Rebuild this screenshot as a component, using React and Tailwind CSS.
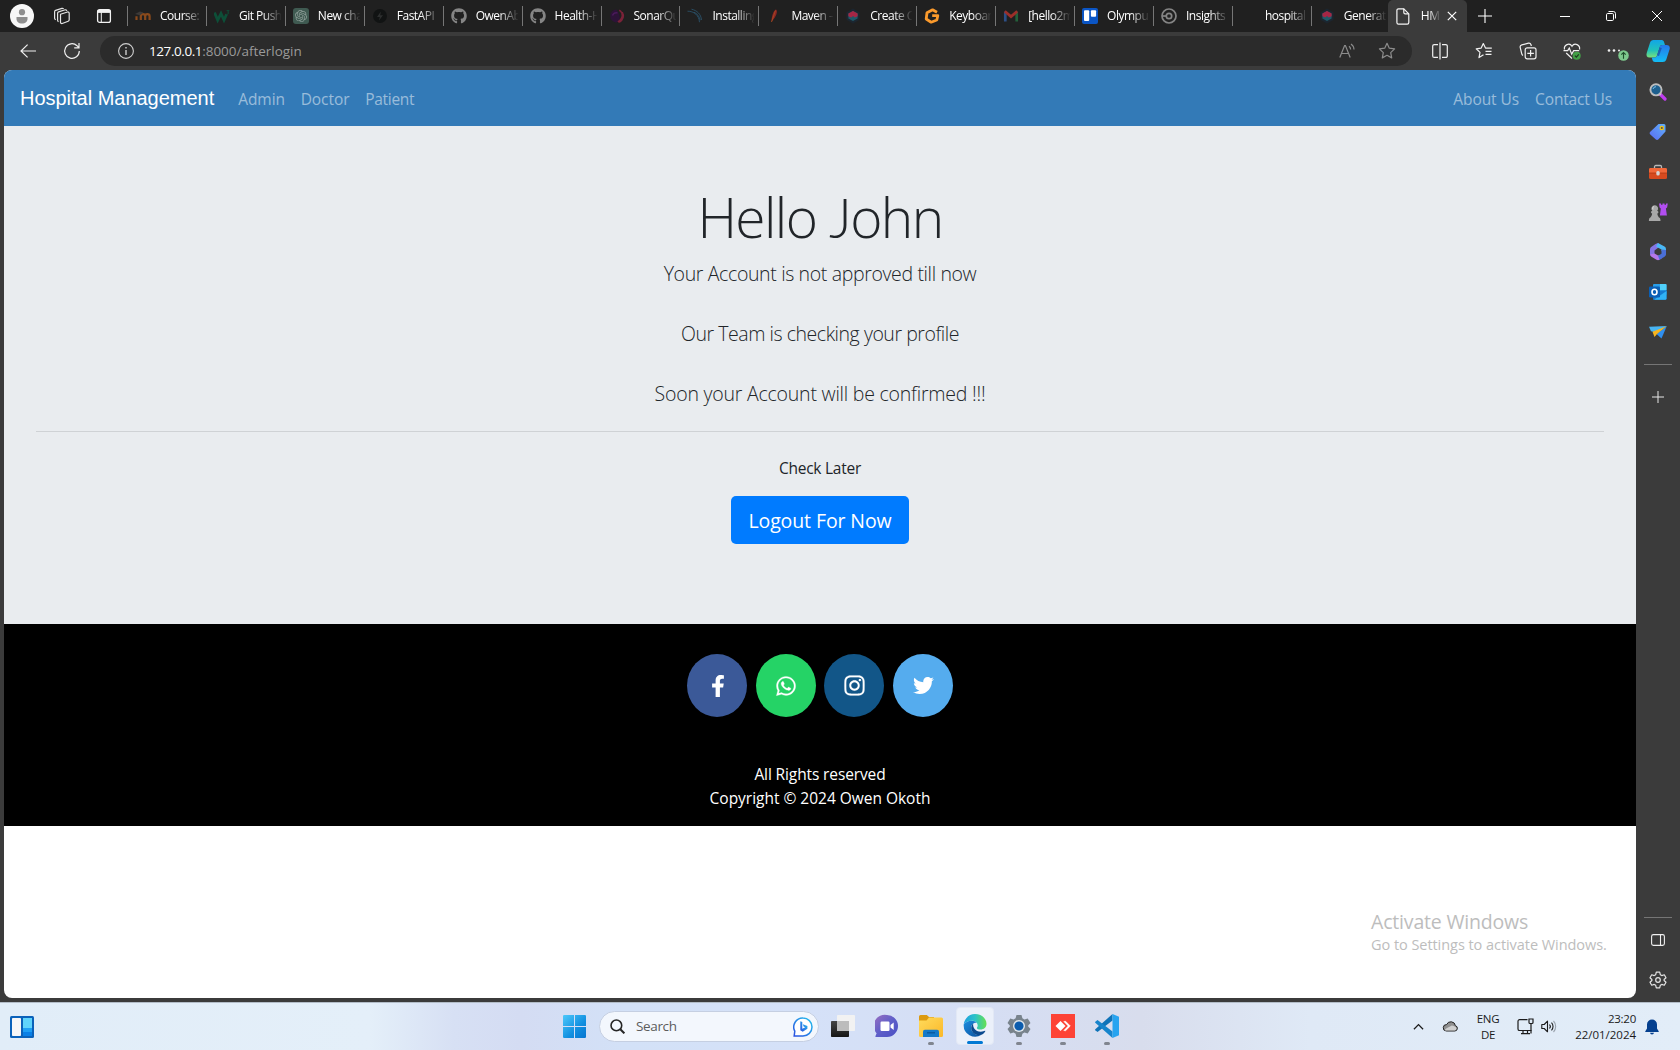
import React from "react";
import { FaFacebookF, FaWhatsapp, FaInstagram, FaTwitter, FaGithub } from "react-icons/fa";
import { SiOpenai } from "react-icons/si";

/* ---------- Tab favicons ---------- */

const MoodleIcon = () => (
  <svg viewBox="0 0 16 16" className="size-4">
    <path d="M1.5 12V8.2M5.8 12V8.4a2.2 2.2 0 0 1 4.4 0V12M10.2 8.4a2.2 2.2 0 0 1 4.4 0V12" fill="none" stroke="#8a4a1c" strokeWidth="2.2" />
    <path d="M0 6l5-2.6 3.5 1.2L5 7.2 0 6z" fill="#3d3a38" />
  </svg>
);
const W3Icon = () => (
  <svg viewBox="0 0 16 16" className="size-4">
    <path d="M.5 4.500l3.200 7.600L7 5.500l3 6.600 2.600-5.800" fill="none" stroke="#0d4f38" strokeWidth="2.800" />
    <path d="M12.600 2.600h2.400l-1.400 1.600c1.800 0 1.600 2.200-.8 1.800" fill="none" stroke="#0d4f38" strokeWidth=".9" />
  </svg>
);
const ChatIcon = () => (
  <span className="flex size-4 items-center justify-center rounded-[3px] bg-[#3f5a51]">
    <SiOpenai className="size-3 text-[#8b9c96]" />
  </span>
);
const FastIcon = () => (
  <svg viewBox="0 0 16 16" className="size-4">
    <circle cx="8" cy="8" r="7" fill="#111313" />
    <path d="M8.800 3.600L5 9h2.800l-.8 3.600L11 7.200H8.200z" fill="#2d2f2f" />
  </svg>
);
const HubIcon = () => <FaGithub className="size-4 text-[#858585]" />;
const SonarIcon = () => (
  <svg viewBox="0 0 16 16" className="size-4">
    <path d="M7.500 1.500a6.500 6.500 0 1 0 .5 13c2.600-1.500 3.200-4 2.400-6.800C9.800 5.200 8.800 3.200 7.500 1.500z" fill="#2d1338" />
    <path d="M3.500 7.500a4.500 4.500 0 0 1 5-2.500" fill="none" stroke="#4b1a5c" strokeWidth="1.500" />
    <path d="M10.300 2.200c4 2.600 4.400 8-1.400 11.800M13.200 4.200c2.200 3.400 1.200 7.800-3 10.200" fill="none" stroke="#7b2238" strokeWidth="1.500" />
  </svg>
);
const WaveIcon = () => (
  <svg viewBox="0 0 16 16" className="size-4" fill="none" stroke="#2a5068" strokeWidth=".9">
    <path d="M.5 3.200c6.500 0 11.500 4 12 11M4.500 1.200c5.500 1.200 9.500 5 10 10.800M7 4.200c3 1.400 5.500 4 6.200 8" />
  </svg>
);
const MavenIcon = () => (
  <svg viewBox="0 0 16 16" className="size-4">
    <path d="M9.700 1.500c2 .6 1.300 4-.2 6.800-1 2-2.500 3.700-4 5.700.1-3 .5-9.500 4.200-12.500z" fill="#8c2424" />
    <path d="M9.500 2.500L5.500 14" stroke="#a8501f" strokeWidth=".8" />
  </svg>
);
const CubeIcon = () => (
  <svg viewBox="0 0 16 16" className="size-4">
    <path d="M8 .5l6.500 3.700v7.600L8 15.500l-6.500-3.700V4.200z" fill="#1c2630" />
    <path d="M8 3l4.600 2.500v5L8 13l-4.600-2.500v-5z" fill="#20596a" />
    <path d="M8 3l4.600 2.500v2.700L9.800 9.600 8 8 6.200 9.600 3.400 8.200V5.500z" fill="#a62646" />
  </svg>
);
const GitIcon = () => (
  <svg viewBox="0 0 16 16" className="size-4">
    <path d="M13 4.200L8.600 1.800 3 4.800 2.200 11l5 3.200 5.600-2.200 1-4.300H8.200" fill="none" stroke="#fb9a2c" strokeWidth="2.800" strokeLinejoin="round" />
  </svg>
);
const MailIcon = () => (
  <svg viewBox="0 0 16 16" className="size-4" fill="none" strokeWidth="2.700">
    <path d="M2.300 3.600V13.500" stroke="#2c4f86" />
    <path d="M13.700 3.600V13.500" stroke="#23603a" />
    <path d="M1.800 3.300L8 8.600l6.200-5.300" stroke="#9c2f29" />
  </svg>
);
const BoardIcon = () => (
  <svg viewBox="0 0 16 16" className="size-4">
    <rect width="16" height="16" rx="2" fill="#0b55c4" />
    <rect x="2" y="2.300" width="5.200" height="10.700" rx="1" fill="#fff" />
    <rect x="8.900" y="2.300" width="5.200" height="6.400" rx="1" fill="#fff" />
  </svg>
);
const TargetIcon = () => (
  <svg viewBox="0 0 16 16" className="size-4" fill="none" stroke="#858585" strokeWidth="1.700">
    <circle cx="8" cy="8" r="7" />
    <circle cx="8" cy="8" r="2.700" />
    <path d="M1 8h4.300" />
  </svg>
);
const Blank = () => <span className="size-4" />;

const TABS = [
  ["Course:", MoodleIcon], ["Git Push", W3Icon], ["New cha", ChatIcon], ["FastAPI", FastIcon],
  ["OwenAb", HubIcon], ["Health-H", HubIcon], ["SonarQu", SonarIcon], ["Installing", WaveIcon],
  ["Maven –", MavenIcon], ["Create C", CubeIcon], ["Keyboar", GitIcon], ["[hello2m", MailIcon],
  ["Olympu", BoardIcon], ["Insights", TargetIcon], ["hospital", Blank], ["Generat", CubeIcon],
];

function TabStrip() {
  return (
    <div className="flex h-8 items-center bg-[#202020] text-white">
      <div className="flex w-[127px] items-center pl-[10px]">
        <span className="flex size-6 items-center justify-center rounded-full bg-[#f7f7f7]">
          <svg viewBox="0 0 12 15" className="h-[15px] w-3" fill="#8e8e8e">
            <circle cx="6" cy="3.200" r="3.100" />
            <path d="M.5 8h11v1.800C11.500 13 9 14.600 6 14.600S.5 13 .5 9.800z" />
          </svg>
        </span>
        <svg viewBox="0 0 18 18" className="ml-[19px] size-[18px]" fill="none" stroke="#e4e4e4" strokeWidth="1.200" strokeLinejoin="round">
          <path d="M7.500 7.200l7-2.200a1.300 1.300 0 0 1 1.700 1.300v6.400a1.600 1.600 0 0 1-1 1.500l-6 2.300a1.300 1.300 0 0 1-1.700-1.300z" />
          <path d="M5.600 14.600a1.300 1.300 0 0 1-1-1.300V6.400a1.500 1.500 0 0 1 1-1.500l6.600-2.100a1.300 1.300 0 0 1 1.600 1" />
          <path d="M2.800 12.600a1.300 1.300 0 0 1-1.200-1.300V4.900a1.500 1.500 0 0 1 1-1.500l6.300-2a1.300 1.300 0 0 1 1.600.7" />
        </svg>
        <svg viewBox="0 0 16 16" className="ml-[25px] size-4" fill="none" stroke="#f2f2f2" strokeWidth="1.300">
          <rect x="1.600" y="1.600" width="12.800" height="12.800" rx="2" />
          <path d="M1.600 3.400h12.800" strokeWidth="3" />
          <path d="M5.300 4v10" strokeWidth="1" />
        </svg>
      </div>
      {TABS.map(([label, Icon], i) => (
        <div key={i} className="flex h-5 w-[78.930px] items-center border-l border-[#767676] pl-[7px]">
          <Icon />
          <span className="ml-[9px] w-[42px] overflow-hidden whitespace-nowrap [mask-image:linear-gradient(to_right,#000_55%,transparent_102%)] text-[12px] leading-5 tracking-[-0.500px]">
            {label}
          </span>
        </div>
      ))}
      <div className="-ml-[2px] flex h-8 w-[79px] items-center rounded-t-[5px] bg-[#3b3b3b] pl-[8px]">
        <svg viewBox="0 0 14 17" className="h-[17px] w-[14px]" fill="none" stroke="#f5f5f5" strokeWidth="1.200" strokeLinejoin="round">
          <path d="M2.500.800h5.300l5 5v8.700a1.600 1.600 0 0 1-1.600 1.600H2.500A1.600 1.600 0 0 1 .900 14.500V2.400A1.600 1.600 0 0 1 2.500.800z" />
          <path d="M7.800.800v3.600c0 .9.500 1.400 1.400 1.400h3.600" />
        </svg>
        <span className="ml-[11px] w-[19px] overflow-hidden whitespace-nowrap [mask-image:linear-gradient(to_right,#000_40%,transparent_105%)] text-[12px] leading-5 tracking-[-0.3px]">HM</span>
        <svg viewBox="0 0 10 10" className="ml-[7px] size-[10px]" stroke="#fff" strokeWidth="1.200"><path d="M.8.8l8.400 8.400M9.200.8L.8 9.200" /></svg>
      </div>
      <svg viewBox="0 0 14 14" className="ml-[11px] size-[14px]" stroke="#fff" strokeWidth="1.100"><path d="M7 0v14M0 7h14" /></svg>
      <div className="ml-auto flex">
        <span className="flex w-[46px] justify-center"><svg viewBox="0 0 10 10" className="size-[10px]" stroke="#fff"><path d="M0 5.500h10" /></svg></span>
        <span className="flex w-[46px] justify-center">
          <svg viewBox="0 0 10 10" className="size-[10px]" fill="none" stroke="#fff">
            <rect x=".5" y="2.500" width="7" height="7" rx="1.200" />
            <path d="M2.500.5h4.800a2.200 2.200 0 0 1 2.200 2.200v4.800" />
          </svg>
        </span>
        <span className="flex w-[46px] justify-center"><svg viewBox="0 0 10 10" className="size-[10px]" stroke="#fff"><path d="M0 0l10 10M10 0L0 10" /></svg></span>
      </div>
    </div>
  );
}

/* ---------- Address bar ---------- */

const Cell = ({ children }) => <span className="flex w-11 items-center justify-center">{children}</span>;

function Toolbar() {
  return (
    <div className="flex h-[38px] bg-[#3b3b3b] text-[#f0f0f0]">
      <div className="flex w-[100px] items-center pl-[6px]">
        <Cell>
          <svg viewBox="0 0 16 14" className="h-[14px] w-4" fill="none" stroke="currentColor" strokeWidth="1.200"><path d="M16 7H1M7.600.600L1 7l6.600 6.400" /></svg>
        </Cell>
        <Cell>
          <svg viewBox="0 0 18 18" className="size-[18px]" fill="none" stroke="currentColor" strokeWidth="1.200">
            <path d="M16.300 9A7.300 7.300 0 1 1 14 3.700l1.800 1.900M16 1v4.800h-4.800" />
          </svg>
        </Cell>
      </div>
      <div className="mt-1 flex h-[30px] w-[1312px] items-center rounded-full bg-[#2b2b2b] pl-[18px] pr-[16px]">
        <svg viewBox="0 0 16 16" className="size-4" fill="none" stroke="#cfcfcf" strokeWidth="1.100">
          <circle cx="8" cy="8" r="7.400" />
          <path d="M8 7v5" strokeWidth="1.400" /><path d="M8 4v1.500" strokeWidth="1.400" />
        </svg>
        <span className="ml-[15px] text-[13.500px] leading-[30px] tracking-[-0.420px] text-white">127.0.0.1</span>
        <span className="text-[13.500px] leading-[30px] tracking-[-0.020px] text-[#9a9a9a]">:8000/afterlogin</span>
        <svg viewBox="0 0 16 16" className="ml-auto size-4" fill="none" stroke="#8c8c8c" strokeWidth="1.200">
          <path d="M.8 14.500L5.600 2.500h.8l4.800 12M2.500 10.500h7" />
          <path d="M10 3.300a4 4 0 0 1 1.600 3.200M12 1a7 7 0 0 1 3 5.500" />
        </svg>
        <svg viewBox="0 0 18 18" className="ml-[23px] size-[18px]" fill="none" stroke="#8c8c8c" strokeWidth="1.200" strokeLinejoin="round">
          <path d="M9 1.300l2.300 4.900 5.300.7-3.900 3.700 1 5.300L9 13.300l-4.700 2.600 1-5.300L1.400 6.900l5.300-.7z" />
        </svg>
      </div>
      <div className="ml-[6px] flex">
        <Cell>
          <svg viewBox="0 0 16 18" className="h-[18px] w-4" fill="none" stroke="currentColor" strokeWidth="1.200">
            <path d="M8 .500v17M6 2.600H2.200A1.500 1.500 0 0 0 .700 4.100v9.800a1.500 1.500 0 0 0 1.500 1.500H6M10 2.600h3.800a1.500 1.500 0 0 1 1.500 1.500v9.800a1.500 1.500 0 0 1-1.500 1.500H10" />
          </svg>
        </Cell>
        <Cell>
          <svg viewBox="0 0 18 18" className="size-[18px]" fill="none" stroke="currentColor" strokeWidth="1.200" strokeLinejoin="round">
            <path d="M8.500 12.800L4 15.600l1-5.200L1.200 6.800l5-.7L8.300 1.600l2.200 4.500h6.300M10.500 9.300h6M10.500 12.300h6" />
          </svg>
        </Cell>
        <Cell>
          <svg viewBox="0 0 18 18" className="size-[18px]" fill="none" stroke="currentColor" strokeWidth="1.200">
            <rect x="6.200" y="5.800" width="10.800" height="11" rx="2" />
            <path d="M11.600 8v6.600M8.300 11.300h6.600" />
            <path d="M4 13.500a2.500 2.500 0 0 1-1.300-1.800L1.200 5.400a2.200 2.200 0 0 1 1.600-2.600L9.500 1.200A2.200 2.200 0 0 1 12 2.800l.4 1.200" />
          </svg>
        </Cell>
        <Cell>
          <svg viewBox="0 0 18 18" className="size-[18px]" fill="none" stroke="currentColor" strokeWidth="1.200">
            <path d="M1.500 7.500c-1-4.500 5-7.500 7.500-3.200C11.500 0 17.500 3 16.500 7.500M.5 8.600h4.200l1.600-2.500 2.400 6 2-3.500h5.500M3.200 11L9 16.500" />
            <circle cx="13.700" cy="13.700" r="4" fill="#43a047" stroke="none" />
            <path d="M11.900 13.700l1.400 1.400 2.500-2.800" stroke="#1d3a1f" />
          </svg>
        </Cell>
        <Cell>
          <svg viewBox="0 0 26 20" className="h-5 w-[26px]">
            <g fill="#f0f0f0"><circle cx="6" cy="9.500" r="1.300" /><circle cx="11" cy="9.500" r="1.300" /><circle cx="16" cy="9.500" r="1" /></g>
            <circle cx="20.500" cy="14.500" r="5.300" fill="#7dc88c" />
            <path d="M20.500 17.800v-6M18.300 13.700l2.200-2.200 2.200 2.200" fill="none" stroke="#1f4d2a" strokeWidth="1.100" />
          </svg>
        </Cell>
      </div>
      <span className="flex w-10 items-center justify-center">
        <svg viewBox="0 0 24 24" className="size-6">
          <defs>
            <linearGradient id="cpA" x1="0" y1="0" x2="0" y2="1"><stop offset="0" stopColor="#12a5e8" /><stop offset=".6" stopColor="#22c3b8" /><stop offset="1" stopColor="#7be07a" /></linearGradient>
            <linearGradient id="cpB" x1="0" y1="0" x2="0" y2="1"><stop offset="0" stopColor="#2577ea" /><stop offset="1" stopColor="#12bdf5" /></linearGradient>
          </defs>
          <path d="M7.500 1h8.200c1.500 0 2 1 2.400 2.200L19 6h-2.500c-1.600 0-2.400.8-2.900 2.400l-2.600 8c-.5 1.500-1.400 2.100-3 2.100H3.500C.8 18.500 0 16.500.7 14L4 3.700C4.600 1.900 5.700 1 7.500 1z" fill="url(#cpA)" />
          <path d="M16.500 6h4c2.800 0 3.800 2 3 4.500l-3.200 10c-.6 1.700-1.800 2.500-3.500 2.500H9c-1.400 0-2.200-.8-2.600-2.200l-.7-2.300H8c1.600 0 2.500-.6 3-2.100l2.600-8C14.100 6.800 14.900 6 16.500 6z" fill="url(#cpB)" />
          <path d="M13.600 8.400L11 16.400 13 17l2.800-8z" fill="#1b3f8f" opacity=".6" />
        </svg>
      </span>
    </div>
  );
}

/* ---------- Side bar ---------- */

const SIDE_ICONS = [
  <svg viewBox="0 0 18 18" className="size-[18px]">
    <path d="M11 11l5 5" stroke="#c03df0" strokeWidth="3.200" strokeLinecap="round" />
    <path d="M9.800 9.800l2 2" stroke="#cfcfcf" strokeWidth="2" />
    <circle cx="7" cy="6.800" r="5.600" fill="#1d5f8e" stroke="#bdbdbd" strokeWidth="1.900" />
    <path d="M4 6a3 3 0 0 1 3-2.300" stroke="#7fc3ea" fill="none" />
  </svg>,
  <svg viewBox="0 0 18 18" className="size-[18px]">
    <defs><linearGradient id="tag" x1="1" y1="0" x2="0" y2="1"><stop offset="0" stopColor="#5fb0fb" /><stop offset="1" stopColor="#5b6bf0" /></linearGradient></defs>
    <path d="M9.500 1h5.500a1.500 1.500 0 0 1 1.500 1.500v6l-7 7.700a2 2 0 0 1-2.900 0L1.300 11.500a2 2 0 0 1 0-2.800z" fill="url(#tag)" />
    <circle cx="12.800" cy="5" r="1.700" fill="#555" stroke="#f3c513" strokeWidth="1.200" />
  </svg>,
  <svg viewBox="0 0 18 18" className="size-[18px]">
    <path d="M5.500 5.500V3.800A1.300 1.300 0 0 1 6.800 2.500h4.400a1.300 1.300 0 0 1 1.300 1.300v1.700" fill="none" stroke="#b9b9b9" strokeWidth="1.300" />
    <rect x="0" y="5" width="18" height="11" rx="1.500" fill="#d64a1f" />
    <path d="M0 6.500A1.500 1.500 0 0 1 1.500 5h15A1.500 1.500 0 0 1 18 6.500V10H0z" fill="#f0683a" />
    <path d="M0 10h18" stroke="#a8330f" strokeWidth=".7" />
    <rect x="7.300" y="8" width="3.400" height="4.500" rx="1.500" fill="#d5d5d5" />
  </svg>,
  <svg viewBox="0 0 20 20" className="size-5">
    <path d="M11 1.500h2v1.300h1.500V1.500h2v1.300H18V1.500h1.800l-.7 4-1.200.9 1 7.100h-7l.9-7.100-1.200-.9z" fill="#b24ef0" />
    <path d="M6.800 3.200a3.300 3.300 0 0 1 2.400 5.600l1.100.7v1.400l-1 .5c.2 2 .9 3.400 2.500 4.700.7.600.7 2.900.7 2.900H.9s0-2.300.7-2.900c1.700-1.300 2.300-2.700 2.500-4.700l-1-.5V9.500l1.200-.7a3.300 3.300 0 0 1 2.500-5.600z" fill="#a8a8a8" />
    <path d="M6 4.500a2 2 0 0 0-1 3" stroke="#dedede" fill="none" />
  </svg>,
  <svg viewBox="0 0 18 18" className="size-[18px]">
    <path d="M9 0L6.500 1 2.500 3.800A3 3 0 0 0 1 6.300v5.200c1.500 1.500 3 1.500 4.500.3V7.500L11.500 3z" fill="#8574e4" />
    <path d="M9 0l6.500 3.600A3 3 0 0 1 17 6.200v4L12.500 8V6.500L7 3.500z" fill="#4ab8f5" />
    <path d="M1 11.500a3 3 0 0 0 1.500 2.300l5 3a3 3 0 0 0 3 0L13 15l-.5-3L9 12.500l-3.500-2z" fill="#b678ea" />
    <path d="M17 7v4.500a3 3 0 0 1-1.500 2.300l-5 3-1.500-4 3.500-2V6.500z" fill="#4a6fd8" />
  </svg>,
  <svg viewBox="0 0 18 18" className="size-[18px]">
    <rect x="4" y="1" width="13.500" height="11" rx="1" fill="#2b9fe8" />
    <path d="M11 1h5.500a1 1 0 0 1 1 1v5H11z" fill="#50d0fa" />
    <path d="M4.500 8l13-.5V15.500a1.300 1.300 0 0 1-1.300 1.300H4z" fill="#157bd0" />
    <path d="M5 16.800L17.500 8v7.500a1.300 1.300 0 0 1-1.300 1.300z" fill="#30b2f5" />
    <rect x="0" y="3.500" width="11" height="11" rx="1.200" fill="#0a5fb5" />
    <ellipse cx="5.500" cy="9" rx="2.500" ry="2.700" fill="none" stroke="#fff" strokeWidth="1.600" />
  </svg>,
  <svg viewBox="0 0 18 18" className="size-[18px]">
    <path d="M0 3.800L17.800 3 7 9.500 2 8.200z" fill="#48b4f2" />
    <path d="M17.800 3L12.500 15.500 7.500 11z" fill="#2f8ff0" />
    <path d="M17.500 3.200L3.500 8.700l2 5.300L8 11z" fill="#f7b51f" />
  </svg>,
];

function Sidebar() {
  return (
    <div className="flex w-11 flex-col items-center bg-[#3b3b3b] pt-[2px]">
      {SIDE_ICONS.map((icon, i) => <span key={i} className="flex h-10 items-center justify-center">{icon}</span>)}
      <span className="mt-[12px] h-px w-7 bg-[#757575]" />
      <svg viewBox="0 0 12 12" className="mt-[26px] size-3" stroke="#e8e8e8" strokeWidth="1"><path d="M6 0v12M0 6h12" /></svg>
      <span className="mt-auto h-px w-7 bg-[#757575]" />
      <span className="mt-[2px] flex h-10 items-center justify-center">
        <svg viewBox="0 0 14 12" className="h-3 w-[14px]" fill="none" stroke="#f0f0f0" strokeWidth="1.100"><rect x=".6" y=".6" width="12.800" height="10.800" rx="1.800" /><path d="M9.500 1v10" /></svg>
      </span>
      <span className="mb-[2px] flex h-10 items-center justify-center">
        <svg viewBox="0 0 18 18" className="size-[18px]" fill="none" stroke="#e4e4e4" strokeWidth="1.200" strokeLinejoin="round">
          <path d="M7.300 1.200h3.400l.6 2.500 1.500.9 2.500-.8 1.700 2.900L15.100 8.500v1l1.900 1.800-1.700 2.900-2.500-.8-1.500.9-.6 2.500H7.300l-.6-2.500-1.500-.9-2.500.8L1 11.300l1.900-1.800v-1L1 6.700l1.700-2.900 2.500.8 1.500-.9z" />
          <circle cx="9" cy="9" r="2.300" />
        </svg>
      </span>
    </div>
  );
}

/* ---------- Web page ---------- */

function SocialLink({ color, children }) {
  return <a className={`flex h-[63px] w-[60px] items-center justify-center rounded-[50%] text-white ${color}`}>{children}</a>;
}

function Page() {
  return (
    <div className="mb-1 ml-1 flex w-[1632px] flex-col overflow-hidden rounded-lg bg-white text-[#212529]">
      <nav className="flex h-14 items-center bg-[#337ab7] pl-4 pr-[24px] pt-px text-[15.500px] leading-6 text-white/50">
        <span className="mb-[2px] mr-6 font-['Liberation_Sans',Arial,sans-serif] text-[20px] leading-[30px] tracking-[-0.020px] text-white">Hospital Management</span>
        <span className="w-[62.500px] tracking-[-0.050px]">Admin</span>
        <span className="w-[64.500px] tracking-[-0.060px]">Doctor</span>
        <span className="tracking-[-0.280px]">Patient</span>
        <span className="ml-auto mr-[16px] tracking-[-0.060px]">About Us</span>
        <span className="tracking-[-0.150px]">Contact Us</span>
      </nav>
      <header className="flex h-[498px] flex-col items-center bg-[#e9ecef] px-8 pt-[58px]">
        <h1 className="mb-[8px] h-[67px] whitespace-nowrap text-[55px] font-light leading-[66px] tracking-[-1.600px]">
          Hello <span className="font-['Lato','Open_Sans',sans-serif]">J</span>ohn
        </h1>
        <p className="text-[19.500px] font-light leading-[30px] tracking-[-0.360px]">Your Account is not approved till now</p>
        <p className="mt-[30px] text-[19.500px] font-light leading-[30px] tracking-[-0.460px]">Our Team is checking your profile</p>
        <p className="mt-[30px] text-[19.500px] font-light leading-[30px] tracking-[-0.220px]">Soon your Account will be confirmed !!!</p>
        <hr className="mt-[22px] w-[1568px] border-t border-[#cfd2d5]" />
        <p className="mt-6 text-[15.500px] leading-6 tracking-[-0.250px]">Check Later</p>
        <button className="mt-4 h-12 w-[178px] rounded-[5px] bg-[#007bff] pt-[2px] text-[19.500px] leading-[30px] tracking-[-0.100px] text-white">Logout For Now</button>
      </header>
      <footer className="flex h-[202px] flex-col items-center bg-black pt-[30px] text-[15.500px] leading-6 text-white">
        <div className="flex gap-[8.700px]">
          <SocialLink color="bg-[#3b5998]"><FaFacebookF className="ml-[2px] h-[22px] w-[18px]" /></SocialLink>
          <SocialLink color="bg-[#25d366]"><FaWhatsapp className="size-[22px] stroke-white stroke-[6px]" /></SocialLink>
          <SocialLink color="bg-[#125688]"><FaInstagram className="size-[23px] stroke-white stroke-[4px]" /></SocialLink>
          <SocialLink color="bg-[#55acee]"><FaTwitter className="size-[21px]" /></SocialLink>
        </div>
        <p className="mt-[45px] tracking-[-0.120px]">All Rights reserved</p>
        <p className="tracking-[-0.020px]">Copyright © 2024 Owen Okoth</p>
      </footer>
      <div className="ml-auto mr-[28px] mt-[82px] w-[237px] whitespace-nowrap text-[#bdbdbd]">
        <p className="text-[19.500px] leading-7 tracking-[-0.180px]">Activate Windows</p>
        <p className="text-[14.500px] leading-[18px] tracking-[-0.050px]">Go to Settings to activate Windows.</p>
      </div>
    </div>
  );
}

/* ---------- Task bar ---------- */

const APPS = [
  [<svg viewBox="0 0 24 24" className="size-6">
    <defs><linearGradient id="tvA" x1="0" y1="0" x2="0" y2="1"><stop offset="0" stopColor="#454545" /><stop offset="1" stopColor="#151515" /></linearGradient></defs>
    <rect x="0" y="7" width="18" height="16" rx=".8" fill="url(#tvA)" />
    <rect x="6" y="1" width="18" height="16" rx=".8" fill="#f2f2f2" />
    <rect x="6" y="7" width="12" height="10" fill="#bcbcbc" />
  </svg>, null],
  [<svg viewBox="0 0 24 24" className="size-6">
    <defs><linearGradient id="tm" x1="0" y1="0" x2="1" y2="1"><stop offset="0" stopColor="#9b6fc0" /><stop offset=".5" stopColor="#5f5fc9" /><stop offset="1" stopColor="#4a4fc4" /></linearGradient></defs>
    <path d="M12 1a11 11 0 1 1 0 22H1.200a.8.8 0 0 1-.6-1.200l1-2.600A11 11 0 0 1 12 1z" fill="url(#tm)" />
    <rect x="5.500" y="7.500" width="9" height="9.500" rx="1.200" fill="#fff" />
    <path d="M15.500 11l3.200-2.500v7.500l-3.200-2.500z" fill="#fff" />
  </svg>, null],
  [<svg viewBox="0 0 24 24" className="size-6">
    <defs><linearGradient id="fd" x1="0" y1="0" x2="1" y2="1"><stop offset="0" stopColor="#ffdb5c" /><stop offset="1" stopColor="#fbb829" /></linearGradient></defs>
    <path d="M0 2.500A1.500 1.500 0 0 1 1.500 1h6.300l2.200 2h5v5H0z" fill="#dc9a10" />
    <path d="M0 6.500h7.500L10 3.500h12.500A1.500 1.500 0 0 1 24 5v16.500a1.500 1.500 0 0 1-1.500 1.500h-21A1.500 1.500 0 0 1 0 21.500z" fill="url(#fd)" />
    <path d="M4 23v-5.500A1.800 1.800 0 0 1 5.800 15.700h12.400a1.800 1.800 0 0 1 1.800 1.800V23z" fill="#1579c8" />
    <path d="M8 18.800h8" stroke="#0b5496" strokeWidth="1.200" />
  </svg>, "dot"],
  [<svg viewBox="0 0 24 24" className="size-6">
    <defs>
      <linearGradient id="eA" x1="0" y1=".3" x2="1" y2=".3"><stop offset="0" stopColor="#1f9fe0" /><stop offset=".5" stopColor="#2cc3c8" /><stop offset="1" stopColor="#66e04f" /></linearGradient>
      <linearGradient id="eB" x1="0" y1="0" x2="1" y2="1"><stop offset="0" stopColor="#1b8ee0" /><stop offset="1" stopColor="#0c4f9c" /></linearGradient>
    </defs>
    <path d="M.2 11C.8 4.800 5.700 0 12 0c7 0 12 5 12 10.300 0 3.800-3 6-6 6-2.400 0-4-.8-4-1.800 0-.6.8-1 .8-2.600C14.800 9 12 7 8.500 7 4.500 7 1.500 8.800.2 11z" fill="url(#eA)" />
    <path d="M.2 11C1.500 8.800 4.500 7 8.500 7c2.300 0 4.300.9 5.400 2.300C11 8.500 8 11 8 14.500c0 4.200 4.200 7.500 9 7.500.7 0 1.300-.1 1.800-.3A12 12 0 0 1 .2 11z" fill="url(#eB)" />
    <path d="M8 14.500c0-2 .9-3.700 2.200-4.700-1 3.600 2 8.600 7.800 8.600 2 0 3.600-.6 4.300-.9.400-.2.700 0 .4.500-1 1.700-2.400 3-3.900 3.700C13.500 23.200 8 19.500 8 14.500z" fill="#0b4a8f" />
  </svg>, "active"],
  [<svg viewBox="0 0 24 24" className="size-6">
    <path d="M9.500 1h5l.9 3.300 2 1.200 3.300-1L23.500 9l-2.300 2.400v1.200l2.300 2.400-2.800 4.500-3.300-1-2 1.200-.9 3.300h-5l-.9-3.300-2-1.200-3.300 1L.5 15l2.300-2.400v-1.200L.5 9l2.800-4.500 3.300 1 2-1.200z" fill="#78838c" />
    <circle cx="12" cy="12" r="6" fill="#dfe6ec" />
    <circle cx="12" cy="12" r="4.600" fill="#0b5cad" />
  </svg>, "dot"],
  [<svg viewBox="0 0 24 24" className="size-6">
    <rect width="24" height="24" fill="#fd4336" />
    <path d="M4.500 12l5-5 5 5-5 5z" fill="#fff" />
    <path d="M12.800 7.500l1.800-.2 4.700 4.700-4.700 4.700-1.800-.2 4.400-4.500z" fill="#fff" stroke="#fff" strokeWidth=".6" />
  </svg>, "dot"],
  [<svg viewBox="0 0 24 24" className="size-6">
    <path d="M17.500 6.500L2.500 18 .3 16.300a.7.7 0 0 1 0-1L17.500 0z" fill="#0f73b8" />
    <path d="M17.500 17.500L2.500 6 .3 7.700a.7.7 0 0 0 0 1L17.500 24z" fill="#1684cc" />
    <path d="M17.500 0L24 2.800v18.400L17.500 24z" fill="#27a4f0" />
  </svg>, "dot"],
];

function Taskbar() {
  return (
    <div className="flex h-12 border-t border-[#b3bdc8] bg-[linear-gradient(90deg,#e1edf8_0%,#e4eff9_22%,#d7e0f4_27%,#d4dcf3_31%,#d3e1f7_37%,#d5e1f8_48%,#d5def4_58%,#d8dded_68%,#dfe9f6_78%,#e2edf8_100%)] text-[#1b1b1b]">
      <div className="flex w-[552.500px] items-center pl-[10px]">
        <svg viewBox="0 0 24 24" className="size-6">
          <rect y="1" width="24" height="22" rx="1.500" fill="#0b62ba" />
          <rect x="2" y="3" width="9" height="18" rx=".8" fill="#f7f7f7" />
          <path d="M13 3h9v10h-9z" fill="#60d4fb" />
          <path d="M13 13h9v4h-9z" fill="#1e9ff5" />
          <path d="M13 17h9v4h-9z" fill="#0a80e6" />
        </svg>
      </div>
      <Cell>
        <svg viewBox="0 0 23 23" className="size-[23px]">
          <defs><linearGradient id="win" gradientUnits="userSpaceOnUse" x1="0" y1="0" x2="23" y2="23"><stop offset="0" stopColor="#4cc8fb" /><stop offset=".6" stopColor="#118fe0" /><stop offset="1" stopColor="#0675d0" /></linearGradient></defs>
          <path d="M.8 0H11v11H0V.8zM12 0h10.200l.8.800V11H12zM0 12h11v11H.8l-.8-.8zM12 12h11v10.200l-.8.800H12z" fill="url(#win)" />
        </svg>
      </Cell>
      <div className="mb-2 ml-[2.500px] mr-[1.500px] mt-2 flex w-[220px] items-center rounded-full border border-[#c5cfe2] bg-[#f3f7fd] pl-[10px] pr-[5px]">
        <svg viewBox="0 0 16 16" className="size-[15px]" fill="none" stroke="#262626" strokeWidth="1.700"><circle cx="6.800" cy="6.800" r="5.700" /><path d="M11 11l4.300 4.300" strokeWidth="2.200" /></svg>
        <span className="mb-[2px] ml-[11px] text-[13.500px] leading-5 tracking-[-0.350px] text-[#5c5c5c]">Search</span>
        <svg viewBox="0 0 20 20" className="ml-auto size-5">
          <defs><linearGradient id="bing" x1="0" y1="1" x2="1" y2="0"><stop offset="0" stopColor="#2a4fe0" /><stop offset="1" stopColor="#25c3ee" /></linearGradient></defs>
          <path d="M10 1a9 9 0 1 1 0 18H1.200l.6-4.800A9 9 0 0 1 10 1z" fill="#fff" stroke="url(#bing)" strokeWidth="1.500" />
          <path d="M7.300 4.300l2 .8v6.700l3-1.500-1.700-.8-.8-2.200 4.600 1.800v2.700l-4.700 3-2.400-1.500z" fill="url(#bing)" />
        </svg>
      </div>
      {APPS.map(([icon, state], i) => (
        <div key={i} className="flex w-11 flex-col items-center pt-1">
          <div className={state === "active" ? "flex h-[38px] w-[38px] flex-col items-center rounded-[4px] border border-[#e2e8f5] bg-[#ebf0fa] pt-[6px]" : "flex h-[38px] w-[38px] flex-col items-center pt-[7px]"}>
            {icon}
            {state === "active" && <span className="mt-[4px] h-[3px] w-4 shrink-0 rounded-full bg-[#0078d4]" />}
            {state === "dot" && <span className="mt-[4px] h-[3px] w-[6px] shrink-0 rounded-full bg-[#80858f]" />}
          </div>
        </div>
      ))}
      <div className="ml-auto flex items-center text-[11.500px] leading-4">
        <svg viewBox="0 0 12 8" className="w-[11px]" fill="none" stroke="#1b1b1b" strokeWidth="1.400"><path d="M1 6.800L6 1.800l5 5" /></svg>
        <svg viewBox="0 0 16 12" className="mb-[2px] ml-[18px] w-4">
          <path d="M4.300 11h8.500a2.700 2.700 0 0 0 .6-5.300A4.600 4.600 0 0 0 4.600 4.600 3.200 3.200 0 0 0 4.300 11z" fill="#8f8f8f" stroke="#222" strokeWidth="1" />
          <path d="M2.500 10c2-2.500 5-3 7.300-4.600 1.500.4 3.500.8 4.500 2.300.5 1.500-.5 2.800-1.700 2.800H4.300c-.8 0-1.300-.1-1.800-.5z" fill="#cfcfcf" />
        </svg>
        <div className="ml-[17px] w-[26px] whitespace-nowrap text-center tracking-[-0.250px]">ENG<br />DE</div>
        <svg viewBox="0 0 17 17" className="ml-[16px] size-[17px]" fill="none" stroke="#1b1b1b" strokeWidth="1.200">
          <path d="M10.500 1.700H2.600A1.600 1.600 0 0 0 1 3.300v7.600a1.600 1.600 0 0 0 1.600 1.600h11.900M6 12.500v3M10.500 12.500v3M4 15.600h9" />
          <path d="M12 1h4v3.500a1 1 0 0 1-1 1h-2a1 1 0 0 1-1-1zM14 5.500v10" />
        </svg>
        <svg viewBox="0 0 16 13" className="ml-[7px] w-4" fill="none" stroke="#1b1b1b" strokeWidth="1.100">
          <path d="M.8 4.500h2.400L6.500 1.200v10.600L3.200 8.500H.8z" strokeLinejoin="round" />
          <path d="M8.500 4.500a3 3 0 0 1 0 4M10.500 2.700a5.500 5.500 0 0 1 0 7.600" />
          <path d="M12.500 1a8 8 0 0 1 0 11" stroke="#9aa3ad" />
        </svg>
        <div className="ml-[15px] w-[64px] whitespace-nowrap text-right tracking-[-0.020px]"><span className="tracking-[-0.250px]">23:20</span><br />22/01/2024</div>
        <svg viewBox="0 0 14 16" className="ml-[9px] mr-[21px] w-[14px]" fill="#05408f">
          <path d="M7 .5a5 5 0 0 1 5 5v4l1.700 2.700a.5.5 0 0 1-.4.800H.7a.5.5 0 0 1-.4-.8L2 9.500v-4a5 5 0 0 1 5-5zM5 13.800h4A2 2 0 0 1 7 15.500a2 2 0 0 1-2-1.700z" />
        </svg>
      </div>
    </div>
  );
}

export default function App() {
  return (
    <div className="flex h-[1050px] w-[1680px] flex-col overflow-hidden bg-[#3b3b3b] font-['Open_Sans','Noto_Sans',sans-serif]">
      <TabStrip />
      <Toolbar />
      <div className="flex min-h-0 flex-1">
        <Page />
        <Sidebar />
      </div>
      <Taskbar />
    </div>
  );
}
